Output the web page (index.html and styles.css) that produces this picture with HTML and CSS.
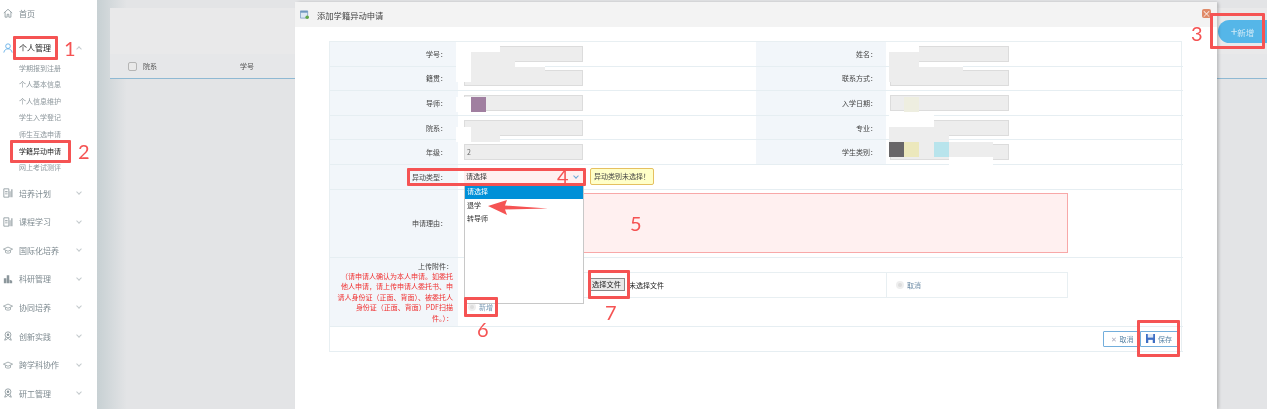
FILE: index.html
```html
<!DOCTYPE html>
<html lang="zh">
<head>
<meta charset="utf-8">
<title>添加学籍异动申请</title>
<link rel="stylesheet" href="styles.css">
</head>
<body>
<svg class="defs" aria-hidden="true">
  <symbol id="i-home" viewBox="0 0 12 12"><path d="M1 6 6 1.500 11 6M2.500 5v6h2.500V7.500h2V11h2.500V5" fill="none" stroke="currentColor" stroke-width="1"/></symbol>
  <symbol id="i-user" viewBox="0 0 12 12"><circle cx="6" cy="3.800" r="2.800" fill="none" stroke="currentColor"/><path d="M1 11.500C1.500 8.500 3.500 7 6 7s4.500 1.500 5 4.500" fill="none" stroke="currentColor"/></symbol>
  <symbol id="i-chart" viewBox="0 0 12 12"><path d="M1 1h6v10H1z" fill="none" stroke="currentColor"/><path d="M2.500 4h3v1h-3zM2.500 6.500h3v1h-3zM8 4h1v7H8zM10 1.500h1.300V11H10z" fill="currentColor"/></symbol>
  <symbol id="i-cap" viewBox="0 0 12 12"><path d="M.5 5 6 2.500 11.500 5 6 7.500z" fill="none" stroke="currentColor" stroke-width=".9"/><path d="M3 6.500V9c1.500 1 4.500 1 6 0V6.500" fill="none" stroke="currentColor" stroke-width=".9"/></symbol>
  <symbol id="i-bld" viewBox="0 0 12 12"><path d="M1 5h3v6H1zM4.500 1.500h3V11h-3zM8 7l3 1v3H8z" fill="currentColor"/></symbol>
  <symbol id="i-rib" viewBox="0 0 12 12"><circle cx="6" cy="4.500" r="3.500" fill="none" stroke="currentColor"/><circle cx="6" cy="4.500" r="1.500" fill="currentColor"/><path d="M3.500 7.500 2 11l2.500-.8L6 8.500l1.500 1.700L10 11 8.500 7.500" fill="none" stroke="currentColor"/></symbol>
</svg>

<div class="screen">
  <nav class="sidebar">
    <a class="nav top"><svg class="ico"><use href="#i-home"/></svg><span>首页</span></a>
    <a class="nav open"><svg class="ico blue"><use href="#i-user"/></svg><span>个人管理</span><i class="chev up"></i></a>
    <div class="subs">
      <a>学期报到注册</a><a>个人基本信息</a><a>个人信息维护</a><a>学生入学登记</a><a>师生互选申请</a><a class="cur">学籍异动申请</a><a>网上考试测评</a>
    </div>
    <a class="nav"><svg class="ico"><use href="#i-chart"/></svg><span>培养计划</span><i class="chev"></i></a>
    <a class="nav"><svg class="ico"><use href="#i-chart"/></svg><span>课程学习</span><i class="chev"></i></a>
    <a class="nav"><svg class="ico"><use href="#i-cap"/></svg><span>国际化培养</span><i class="chev"></i></a>
    <a class="nav"><svg class="ico"><use href="#i-bld"/></svg><span>科研管理</span><i class="chev"></i></a>
    <a class="nav"><svg class="ico"><use href="#i-cap"/></svg><span>协同培养</span><i class="chev"></i></a>
    <a class="nav"><svg class="ico"><use href="#i-rib"/></svg><span>创新实践</span><i class="chev"></i></a>
    <a class="nav"><svg class="ico"><use href="#i-cap"/></svg><span>跨学科协作</span><i class="chev"></i></a>
    <a class="nav"><svg class="ico"><use href="#i-rib"/></svg><span>研工管理</span><i class="chev"></i></a>
  </nav>

  <main class="page">
    <div class="panel">
      <div class="panel-top"><button class="add"><b>+</b>新增</button></div>
      <div class="thead"><i class="chk"></i><span class="th1">院系</span><span>学号</span></div>
    </div>
  </main>

  <section class="dialog">
    <header class="dlg-head">
      <svg class="dlg-ico" viewBox="0 0 10 10"><path d="M.5 1h8v8h-8z" fill="#dde8f4" stroke="#6f97bf" stroke-width=".8"/><path d="M.5 1h8v2h-8z" fill="#6f97bf"/><circle cx="8" cy="8" r="2" fill="#62a84a"/></svg>
      <span>添加学籍异动申请</span>
    </header>
    <div class="form">
      <div class="lab">学号：</div><div class="val"><i class="inp"></i></div><div class="lab rl">姓名：</div><div class="val r"><i class="inp"></i></div>
      <div class="lab">籍贯：</div><div class="val"><i class="inp"></i></div><div class="lab rl">联系方式：</div><div class="val r"><i class="inp"></i></div>
      <div class="lab">导师：</div><div class="val"><i class="inp"></i></div><div class="lab rl">入学日期：</div><div class="val r"><i class="inp"></i></div>
      <div class="lab">院系：</div><div class="val"><i class="inp"></i></div><div class="lab rl">专业：</div><div class="val r"><i class="inp"></i></div>
      <div class="lab">年级：</div><div class="val"><i class="inp">2</i></div><div class="lab rl">学生类别：</div><div class="val r"><i class="inp"></i></div>

      <div class="lab">异动类型：</div>
      <div class="val wide">
        <div class="select">请选择<i class="chev blue-chev"></i></div>
        <div class="tip">异动类别未选择！</div>
      </div>

      <div class="lab">申请理由：</div>
      <div class="val full"><div class="reason"></div></div>

      <div class="lab note">上传附件：<br><em>（请申请人确认为本人申请。如委托他人申请，请上传申请人委托书、申请人身份证（正面、背面）、被委托人身份证（正面、背面）PDF扫描件。）：</em></div>
      <div class="val full upload">
        <div class="up-left"><i class="minus plus"></i><span class="add-file">新增</span></div>
        <div class="file-row">
          <div class="file-cell"><button class="file-btn">选择文件</button><span>未选择文件</span></div>
          <div class="file-cancel"><i class="minus"></i>取消</div>
        </div>
      </div>

      <div class="foot">
        <button class="act"><span class="x">✕</span>取消</button>
        <button class="act">
          <svg class="save" viewBox="0 0 10 10"><path d="M0 0h10v10H0z" fill="#3f6fc4"/><path d="M2 0h6v4H2z" fill="#dfe8f6"/><path d="M2.500 6.500h5V10h-5z" fill="#fff"/></svg>保存</button>
      </div>
    </div>
    <button class="close">×</button>
  </section>

  <div class="dropdown">
    <div class="opt sel">请选择</div>
    <div class="opt">退学</div>
    <div class="opt">转导师</div>
  </div>

  <i class="m m1"></i><i class="m m2"></i><i class="m m3"></i><i class="m m4"></i><i class="m m5"></i><i class="m m6"></i><i class="m m7"></i><i class="m m8"></i><i class="m m9"></i><i class="m m10"></i><i class="m m11"></i><i class="m m12"></i><i class="m m13"></i><i class="m m14"></i><i class="m m15"></i><i class="m m16"></i><i class="m m17"></i><i class="m m18"></i><i class="m m19"></i><i class="m m20"></i><i class="m m21"></i>

  <i class="box b1"></i><i class="box b2"></i><i class="box b3"></i><i class="box b4"></i><i class="box b6"></i><i class="box b7"></i><i class="box b8"></i>
  <span class="num n1">1</span><span class="num n2">2</span><span class="num n3">3</span><span class="num n4">4</span><span class="num n5">5</span><span class="num n6">6</span><span class="num n7">7</span>
  <svg class="arrow" viewBox="0 0 60 15"><path d="M0 6 19 0 17 5.500 60 8.500 17 9.500 19 15z" fill="#f55353"/></svg>
</div>
</body>
</html>
```

FILE: styles.css
```css
* { box-sizing: border-box; }
html, body { margin: 0; height: 409px; overflow: hidden; background: #fff; }
body { font-family: "Noto Sans CJK SC", "Liberation Sans", sans-serif; }
.defs { display: none; }
button { font-family: inherit; padding: 0; }
i { font-style: normal; }

.screen { position: relative; display: flex; width: 1267px; height: 409px; overflow: hidden; filter: blur(.45px); }

/* sidebar */
.sidebar { width: 97px; flex: none; background: #fff; display: flex; flex-direction: column; color: #7e8a90; }
.nav { height: 28.6px; flex: none; display: flex; align-items: center; font-size: 8px; padding-left: 3px; position: relative; }
.nav.top { margin-top: -1px; }
.nav.open { margin-top: 6px; height: 28px; color: #222; }
.ico { width: 10px; height: 10px; margin-right: 6px; color: #8c979c; flex: none; }
.ico.blue { color: #5aa9e6; }
.chev { position: absolute; left: 77px; top: 50%; width: 4px; height: 4px; margin-top: -3px; border-right: 1px solid #c4cacd; border-bottom: 1px solid #c4cacd; transform: rotate(45deg); }
.chev.up { transform: rotate(225deg); margin-top: -1px; }
.subs { display: flex; flex-direction: column; padding-left: 19px; margin-top: -2px; margin-bottom: 3px; }
.subs a { height: 16.6px; line-height: 16.6px; font-size: 7px; color: #8d979c; }
.subs a.cur { color: #222; }

/* dimmed page */
.page { flex: 1; background: linear-gradient(90deg, #c7d0d3 0, #e3e4e6 30px); padding: 8px 0 0 13px; }
.panel-top { height: 46px; background: #e9e9ea; position: relative; }
.add { position: absolute; right: 0; top: 12px; width: 49px; height: 23px; border: 0; border-radius: 12px 0 0 12px; background: #55b6e8; color: #cfeaf7; font-size: 8.500px; }
.add b { font-weight: 400; font-size: 12px; line-height: 10px; }
.thead { height: 25px; display: flex; align-items: center; background: #e6e7e9; border-bottom: 1px solid #8fb9d3; padding-left: 18px; font-size: 7px; color: #555; }
.chk { width: 9px; height: 9px; border: 1px solid #b5b5b5; border-radius: 2px; margin-right: 6px; background: #e9e9e9; }
.th1 { width: 97px; }

/* dialog */
.dialog { position: absolute; left: 295px; top: 2px; width: 922px; height: 407px; background: #fff; border-radius: 3px 3px 0 0; box-shadow: 2px 0 3px rgba(0,0,0,.18); }
.dlg-head { height: 25px; background: #f3f3f3; display: flex; align-items: center; padding-left: 5px; font-size: 8.300px; color: #444; }
.dlg-ico { width: 9px; height: 9px; margin-right: 8px; }
.close { position: absolute; left: 907px; top: 7px; width: 9px; height: 9px; line-height: 8px; border: 0; border-radius: 2px; background: #e08a68; color: #fff; font-size: 9px; }

.form { margin: 14px 0 0 34px; width: 853px; display: grid; grid-template-columns: 128px 298px 130px 297px; grid-template-rows: repeat(6, 24.600px) 68px 69px 25px; border-top: 1px solid #e8eff2; border-right: 1px solid #e8eff2; border-left: 1px solid #e8eff2; }
.lab { background: #f2f6fa; border-bottom: 1px solid #e6eef2; display: flex; align-items: center; justify-content: flex-end; padding-right: 11px; font-size: 7px; color: #444; }
.lab.rl { padding-right: 9px; }
.val { border-bottom: 1px solid #e6eef2; padding-left: 6px; display: flex; align-items: center; position: relative; }
.val.r { padding-left: 4px; }
.val.wide { grid-column: span 3; }
.val.full { grid-column: span 3; }
.inp { width: 119px; height: 16px; background: #ededed; border: 1px solid #dcdcdc; font-size: 7px; color: #666; padding-left: 2px; line-height: 14px; }

.select { width: 119px; height: 14px; background: #fff0f0; font-size: 7px; color: #333; line-height: 13px; padding-left: 2px; position: relative; }
.blue-chev { left: 110px; border-color: #6aa8d8; }
.tip { margin-left: 7px; width: 64px; height: 17px; background: #ffffc8; border: 1px solid #e5c060; border-radius: 2px; font-size: 7px; line-height: 15px; padding-left: 3px; color: #444; }
.reason { width: 604px; height: 60px; background: #fff0f0; border: 1px solid #f8a8a8; }

.note { display: block; text-align: right; font-size: 7px; line-height: 10.400px; padding: 3px 5px 0 6px; }
.note em { font-style: normal; color: #f03030; }
.upload { align-items: flex-start; padding-top: 14px; }
.up-left { width: 115px; flex: none; display: flex; align-items: center; padding-top: 30px; padding-left: 4px; font-size: 7px; color: #7a9ab5; }
.file-row { width: 489px; height: 26px; display: flex; border: 1px solid #e8eff2; }
.file-cell { width: 307px; display: flex; align-items: center; padding-left: 8px; font-size: 7px; color: #222; border-right: 1px solid #e8eff2; }
.file-btn { width: 37px; height: 13px; border: 1px solid #8a8a8a; background: #e9e9e9; font-size: 7.200px; line-height: 11px; margin-right: 4px; color: #222; }
.file-cancel { display: flex; align-items: center; padding-left: 9px; font-size: 7px; color: #6c8ba5; }
.minus { width: 8px; height: 8px; border-radius: 50%; background: #ddd; border: 2px solid #eee; margin-right: 3px; }

.foot { grid-column: span 4; border-bottom: 1px solid #e6eef2; display: flex; justify-content: flex-end; align-items: center; padding-right: 5px; }
.act { width: 38px; height: 16px; display: flex; align-items: center; justify-content: center; background: #fff; border: 1px solid #73aedc; font-size: 7px; color: #5b86a8; border-radius: 1px; margin-left: -1px; }
.x { color: #aab; margin-right: 3px; font-size: 7px; }
.save { width: 9px; height: 9px; margin-right: 3px; }

/* open select list */
.dropdown { position: absolute; left: 464px; top: 185px; width: 120px; height: 119px; background: #fff; border: 1px solid #c8c8c8; border-top: 0; font-size: 7px; color: #333; }
.opt { height: 13.500px; line-height: 13.500px; padding-left: 2px; }
.opt.sel { background: #0090d8; color: #fff; }

/* redaction patches */
.m { position: absolute; background: #ededed; }
.m1 { left: 456px; top: 42px; width: 15px; height: 40px; background: #fff; }
.m2 { left: 471px; top: 42px; width: 29px; height: 10px; background: #fff; }
.m3 { left: 471px; top: 52px; width: 44px; height: 15px; }
.m4 { left: 471px; top: 67px; width: 74px; height: 15px; }
.m5 { left: 515px; top: 62px; width: 30px; height: 5px; background: #fff; }
.m6 { left: 456px; top: 97px; width: 15px; height: 15px; background: #fff; }
.m7 { left: 471px; top: 97px; width: 15px; height: 15px; background: #a07fa0; }
.m8 { left: 456px; top: 127px; width: 15px; height: 15px; background: #fff; }
.m9 { left: 471px; top: 127px; width: 29px; height: 15px; }
.m10 { left: 889px; top: 42px; width: 30px; height: 10px; background: #fff; }
.m11 { left: 889px; top: 52px; width: 30px; height: 15px; }
.m12 { left: 919px; top: 62px; width: 44px; height: 5px; background: #fff; }
.m13 { left: 889px; top: 67px; width: 74px; height: 15px; }
.m14 { left: 904px; top: 97px; width: 15px; height: 15px; background: #eeeee0; }
.m15 { left: 889px; top: 112px; width: 45px; height: 15px; background: #fff; }
.m16 { left: 889px; top: 127px; width: 60px; height: 15px; }
.m17 { left: 889px; top: 142px; width: 15px; height: 15px; background: #686668; }
.m18 { left: 904px; top: 142px; width: 15px; height: 15px; background: #ece8bc; }
.m19 { left: 919px; top: 142px; width: 15px; height: 15px; }
.m20 { left: 934px; top: 142px; width: 15px; height: 15px; background: #b8e4ec; }
.m21 { left: 949px; top: 142px; width: 44px; height: 15px; box-shadow: 0 8px 0 #fff; }

/* annotations */
.box { position: absolute; border: 3px solid #f55353; border-radius: 1px; }
.b1 { left: 13px; top: 36px; width: 45px; height: 24px; }
.b2 { left: 10px; top: 140px; width: 61px; height: 23px; }
.b3 { left: 1210px; top: 13px; width: 55px; height: 36px; }
.b4 { left: 407px; top: 168px; width: 179px; height: 18px; }
.b6 { left: 464px; top: 297px; width: 34px; height: 20px; }
.b7 { left: 588px; top: 270px; width: 42px; height: 29px; }
.b8 { left: 1137px; top: 320px; width: 43px; height: 37px; }
.num { position: absolute; font-family: Lato, sans-serif; font-size: 20px; line-height: 20px; color: #f55353; }
.n1 { left: 64px; top: 38px; }
.n2 { left: 78px; top: 141px; }
.n3 { left: 1191px; top: 23px; }
.n4 { left: 557px; top: 166px; }
.n5 { left: 630px; top: 213px; }
.n6 { left: 477px; top: 319px; }
.n7 { left: 605px; top: 302px; }
.arrow { position: absolute; left: 488px; top: 200px; width: 60px; height: 15px; }
```
